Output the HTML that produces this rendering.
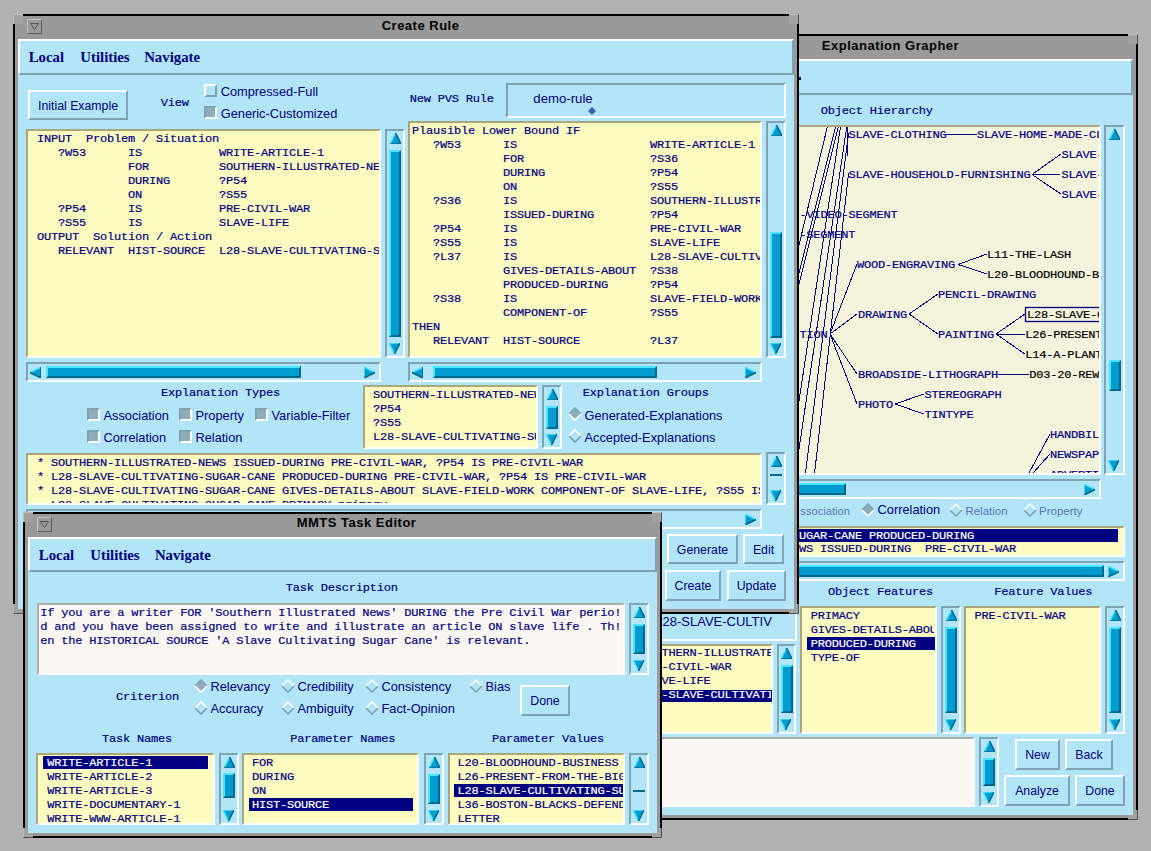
<!DOCTYPE html><html><head><meta charset="utf-8"><style>html,body{margin:0;padding:0;width:1151px;height:851px;overflow:hidden;background:#b2b2b2}div{position:absolute;box-sizing:border-box}svg{position:absolute}</style></head><body>
<div style="left:560px;top:34px;width:578px;height:786px;background:#000;"></div>
<div style="left:562px;top:36px;width:574px;height:782px;background:#999999;"></div>
<div style="left:560px;top:34px;width:10px;height:10px;background:#a2a2a2;border-top:1px solid #bdbdbd;border-left:1px solid #bdbdbd"></div>
<div style="left:1128px;top:34px;width:10px;height:10px;background:#a2a2a2;border-top:1px solid #bdbdbd;border-right:1px solid #505050"></div>
<div style="left:560px;top:810px;width:10px;height:10px;background:#a2a2a2;border-left:1px solid #bdbdbd;border-bottom:1px solid #505050"></div>
<div style="left:1128px;top:810px;width:10px;height:10px;background:#a2a2a2;border-right:1px solid #505050;border-bottom:1px solid #505050"></div>
<div style="left:574px;top:39px;width:15px;height:15px;background:#999999;border-style:solid;border-width:1px;border-color:#c4c4c4 #5c5c5c #5c5c5c #c4c4c4;"></div>
<svg style="position:absolute;left:577px;top:43px" width="9" height="7"><path d="M0.5,0.5 L8.5,0.5 L4.5,6.5 Z" fill="none" stroke="#555" stroke-width="1"/></svg>
<div style="left:821.8px;top:38.80px;font-family:'Liberation Sans', sans-serif;font-size:13px;line-height:13px;color:#000;font-weight:bold;white-space:pre;letter-spacing:0.5px;">Explanation Grapher</div>
<div style="left:565px;top:58.5px;width:568px;height:756.5px;background:#b3e5f8;"></div>
<div style="left:565px;top:58.5px;width:568px;height:36.0px;background:#b3e5f8;border-style:solid;border-width:2px;border-color:#ffffff #7ea3b2 #7ea3b2 #ffffff;"></div>
<div style="left:820.7px;top:104.50px;font-family:'Liberation Mono', monospace;font-size:12px;line-height:12px;color:#000080;font-weight:normal;white-space:pre;letter-spacing:-0.2px;-webkit-text-stroke:0.2px #000080;transform:scaleY(0.93);transform-origin:0 9.20px;">Object Hierarchy</div>
<div style="left:799px;top:77px;width:2px;height:3px;background:#000080;"></div>
<div style="left:640px;top:125px;width:461px;height:350px;background:#f5f3dc;border-style:solid;border-width:2px;border-color:#aba67e #ffffff #ffffff #aba67e;"></div>
<div style="left:642px;top:127px;width:457px;height:346px;overflow:hidden;">
<svg style="position:absolute;left:0;top:0" width="460" height="350"><line x1="304" y1="7" x2="335" y2="7" stroke="#000080" stroke-width="1" shape-rendering="crispEdges"/><line x1="390" y1="47.5" x2="419" y2="27" stroke="#000080" stroke-width="1" shape-rendering="crispEdges"/><line x1="390" y1="47.5" x2="419" y2="47" stroke="#000080" stroke-width="1" shape-rendering="crispEdges"/><line x1="390" y1="47.5" x2="419" y2="67" stroke="#000080" stroke-width="1" shape-rendering="crispEdges"/><line x1="316" y1="137.5" x2="345" y2="127" stroke="#000080" stroke-width="1" shape-rendering="crispEdges"/><line x1="316" y1="137.5" x2="345" y2="147" stroke="#000080" stroke-width="1" shape-rendering="crispEdges"/><line x1="267" y1="187" x2="296" y2="167" stroke="#000080" stroke-width="1" shape-rendering="crispEdges"/><line x1="267" y1="187" x2="296" y2="207" stroke="#000080" stroke-width="1" shape-rendering="crispEdges"/><line x1="354" y1="207" x2="383" y2="187" stroke="#000080" stroke-width="1" shape-rendering="crispEdges"/><line x1="354" y1="207" x2="383" y2="207" stroke="#000080" stroke-width="1" shape-rendering="crispEdges"/><line x1="354" y1="207" x2="383" y2="227" stroke="#000080" stroke-width="1" shape-rendering="crispEdges"/><line x1="356" y1="247" x2="387" y2="247" stroke="#000080" stroke-width="1" shape-rendering="crispEdges"/><line x1="253" y1="277" x2="282" y2="267" stroke="#000080" stroke-width="1" shape-rendering="crispEdges"/><line x1="253" y1="277" x2="282" y2="287" stroke="#000080" stroke-width="1" shape-rendering="crispEdges"/><line x1="188" y1="207" x2="215" y2="137" stroke="#000080" stroke-width="1" shape-rendering="crispEdges"/><line x1="188" y1="207" x2="215" y2="187" stroke="#000080" stroke-width="1" shape-rendering="crispEdges"/><line x1="188" y1="207" x2="215" y2="247" stroke="#000080" stroke-width="1" shape-rendering="crispEdges"/><line x1="188" y1="207" x2="215" y2="277" stroke="#000080" stroke-width="1" shape-rendering="crispEdges"/><line x1="387" y1="346" x2="408" y2="307" stroke="#000080" stroke-width="1" shape-rendering="crispEdges"/><line x1="391" y1="346" x2="408" y2="327" stroke="#000080" stroke-width="1" shape-rendering="crispEdges"/><line x1="185.29999999999995" y1="0" x2="128" y2="239" stroke="#000080" stroke-width="1" shape-rendering="crispEdges"/><line x1="193.39999999999998" y1="0" x2="128" y2="262" stroke="#000080" stroke-width="1" shape-rendering="crispEdges"/><line x1="196.29999999999995" y1="0" x2="128" y2="273" stroke="#000080" stroke-width="1" shape-rendering="crispEdges"/><line x1="198.39999999999998" y1="0" x2="128" y2="466" stroke="#000080" stroke-width="1" shape-rendering="crispEdges"/><line x1="204.70000000000005" y1="0" x2="128" y2="518" stroke="#000080" stroke-width="1" shape-rendering="crispEdges"/><line x1="206.60000000000002" y1="6" x2="163.5" y2="346" stroke="#000080" stroke-width="1" shape-rendering="crispEdges"/><line x1="206.60000000000002" y1="46" x2="172.60000000000002" y2="346" stroke="#000080" stroke-width="1" shape-rendering="crispEdges"/><line x1="205" y1="0" x2="205" y2="29" stroke="#000080" stroke-width="1" shape-rendering="crispEdges"/><rect x="383.5" y="180.5" width="100" height="14" fill="none" stroke="#000080" stroke-width="1.3"/></svg>
<div style="left:206.60000000000002px;top:1.80px;font-family:'Liberation Mono', monospace;font-size:12px;line-height:12px;color:#000080;font-weight:normal;white-space:pre;letter-spacing:-0.2px;-webkit-text-stroke:0.2px #000080;transform:scaleY(0.93);transform-origin:0 9.20px;">SLAVE-CLOTHING</div>
<div style="left:335px;top:1.80px;font-family:'Liberation Mono', monospace;font-size:12px;line-height:12px;color:#000080;font-weight:normal;white-space:pre;letter-spacing:-0.2px;-webkit-text-stroke:0.2px #000080;transform:scaleY(0.93);transform-origin:0 9.20px;">SLAVE-HOME-MADE-CLOTHING</div>
<div style="left:206.60000000000002px;top:41.80px;font-family:'Liberation Mono', monospace;font-size:12px;line-height:12px;color:#000080;font-weight:normal;white-space:pre;letter-spacing:-0.2px;-webkit-text-stroke:0.2px #000080;transform:scaleY(0.93);transform-origin:0 9.20px;">SLAVE-HOUSEHOLD-FURNISHING</div>
<div style="left:419.5px;top:21.80px;font-family:'Liberation Mono', monospace;font-size:12px;line-height:12px;color:#000080;font-weight:normal;white-space:pre;letter-spacing:-0.2px;-webkit-text-stroke:0.2px #000080;transform:scaleY(0.93);transform-origin:0 9.20px;">SLAVE-BEDDING</div>
<div style="left:419.5px;top:41.80px;font-family:'Liberation Mono', monospace;font-size:12px;line-height:12px;color:#000080;font-weight:normal;white-space:pre;letter-spacing:-0.2px;-webkit-text-stroke:0.2px #000080;transform:scaleY(0.93);transform-origin:0 9.20px;">SLAVE-FURNITURE</div>
<div style="left:419.5px;top:61.80px;font-family:'Liberation Mono', monospace;font-size:12px;line-height:12px;color:#000080;font-weight:normal;white-space:pre;letter-spacing:-0.2px;-webkit-text-stroke:0.2px #000080;transform:scaleY(0.93);transform-origin:0 9.20px;">SLAVE-UTENSILS</div>
<div style="left:157.60000000000002px;top:81.80px;font-family:'Liberation Mono', monospace;font-size:12px;line-height:12px;color:#000080;font-weight:normal;white-space:pre;letter-spacing:-0.2px;-webkit-text-stroke:0.2px #000080;transform:scaleY(0.93);transform-origin:0 9.20px;">-VIDEO-SEGMENT</div>
<div style="left:157.29999999999995px;top:101.80px;font-family:'Liberation Mono', monospace;font-size:12px;line-height:12px;color:#000080;font-weight:normal;white-space:pre;letter-spacing:-0.2px;-webkit-text-stroke:0.2px #000080;transform:scaleY(0.93);transform-origin:0 9.20px;">-SEGMENT</div>
<div style="left:215px;top:131.80px;font-family:'Liberation Mono', monospace;font-size:12px;line-height:12px;color:#000080;font-weight:normal;white-space:pre;letter-spacing:-0.2px;-webkit-text-stroke:0.2px #000080;transform:scaleY(0.93);transform-origin:0 9.20px;">WOOD-ENGRAVING</div>
<div style="left:345px;top:121.80px;font-family:'Liberation Mono', monospace;font-size:12px;line-height:12px;color:#000000;font-weight:normal;white-space:pre;letter-spacing:-0.2px;-webkit-text-stroke:0.2px #000000;transform:scaleY(0.93);transform-origin:0 9.20px;">L11-THE-LASH</div>
<div style="left:345px;top:141.80px;font-family:'Liberation Mono', monospace;font-size:12px;line-height:12px;color:#000000;font-weight:normal;white-space:pre;letter-spacing:-0.2px;-webkit-text-stroke:0.2px #000000;transform:scaleY(0.93);transform-origin:0 9.20px;">L20-BLOODHOUND-BUSINESS</div>
<div style="left:296px;top:161.80px;font-family:'Liberation Mono', monospace;font-size:12px;line-height:12px;color:#000080;font-weight:normal;white-space:pre;letter-spacing:-0.2px;-webkit-text-stroke:0.2px #000080;transform:scaleY(0.93);transform-origin:0 9.20px;">PENCIL-DRAWING</div>
<div style="left:216px;top:181.80px;font-family:'Liberation Mono', monospace;font-size:12px;line-height:12px;color:#000080;font-weight:normal;white-space:pre;letter-spacing:-0.2px;-webkit-text-stroke:0.2px #000080;transform:scaleY(0.93);transform-origin:0 9.20px;">DRAWING</div>
<div style="left:157.5px;top:201.80px;font-family:'Liberation Mono', monospace;font-size:12px;line-height:12px;color:#000080;font-weight:normal;white-space:pre;letter-spacing:-0.2px;-webkit-text-stroke:0.2px #000080;transform:scaleY(0.93);transform-origin:0 9.20px;">TION</div>
<div style="left:296px;top:201.80px;font-family:'Liberation Mono', monospace;font-size:12px;line-height:12px;color:#000080;font-weight:normal;white-space:pre;letter-spacing:-0.2px;-webkit-text-stroke:0.2px #000080;transform:scaleY(0.93);transform-origin:0 9.20px;">PAINTING</div>
<div style="left:385px;top:181.80px;font-family:'Liberation Mono', monospace;font-size:12px;line-height:12px;color:#000000;font-weight:normal;white-space:pre;letter-spacing:-0.2px;-webkit-text-stroke:0.2px #000000;transform:scaleY(0.93);transform-origin:0 9.20px;">L28-SLAVE-CULTIVATING</div>
<div style="left:383.29999999999995px;top:201.80px;font-family:'Liberation Mono', monospace;font-size:12px;line-height:12px;color:#000000;font-weight:normal;white-space:pre;letter-spacing:-0.2px;-webkit-text-stroke:0.2px #000000;transform:scaleY(0.93);transform-origin:0 9.20px;">L26-PRESENT-FROM</div>
<div style="left:383.29999999999995px;top:221.80px;font-family:'Liberation Mono', monospace;font-size:12px;line-height:12px;color:#000000;font-weight:normal;white-space:pre;letter-spacing:-0.2px;-webkit-text-stroke:0.2px #000000;transform:scaleY(0.93);transform-origin:0 9.20px;">L14-A-PLANTATION</div>
<div style="left:216px;top:241.80px;font-family:'Liberation Mono', monospace;font-size:12px;line-height:12px;color:#000080;font-weight:normal;white-space:pre;letter-spacing:-0.2px;-webkit-text-stroke:0.2px #000080;transform:scaleY(0.93);transform-origin:0 9.20px;">BROADSIDE-LITHOGRAPH</div>
<div style="left:387.29999999999995px;top:241.80px;font-family:'Liberation Mono', monospace;font-size:12px;line-height:12px;color:#000000;font-weight:normal;white-space:pre;letter-spacing:-0.2px;-webkit-text-stroke:0.2px #000000;transform:scaleY(0.93);transform-origin:0 9.20px;">D03-20-REWARD</div>
<div style="left:282.5px;top:261.80px;font-family:'Liberation Mono', monospace;font-size:12px;line-height:12px;color:#000080;font-weight:normal;white-space:pre;letter-spacing:-0.2px;-webkit-text-stroke:0.2px #000080;transform:scaleY(0.93);transform-origin:0 9.20px;">STEREOGRAPH</div>
<div style="left:216px;top:271.80px;font-family:'Liberation Mono', monospace;font-size:12px;line-height:12px;color:#000080;font-weight:normal;white-space:pre;letter-spacing:-0.2px;-webkit-text-stroke:0.2px #000080;transform:scaleY(0.93);transform-origin:0 9.20px;">PHOTO</div>
<div style="left:282.5px;top:281.80px;font-family:'Liberation Mono', monospace;font-size:12px;line-height:12px;color:#000080;font-weight:normal;white-space:pre;letter-spacing:-0.2px;-webkit-text-stroke:0.2px #000080;transform:scaleY(0.93);transform-origin:0 9.20px;">TINTYPE</div>
<div style="left:408px;top:301.80px;font-family:'Liberation Mono', monospace;font-size:12px;line-height:12px;color:#000080;font-weight:normal;white-space:pre;letter-spacing:-0.2px;-webkit-text-stroke:0.2px #000080;transform:scaleY(0.93);transform-origin:0 9.20px;">HANDBILL</div>
<div style="left:408px;top:321.80px;font-family:'Liberation Mono', monospace;font-size:12px;line-height:12px;color:#000080;font-weight:normal;white-space:pre;letter-spacing:-0.2px;-webkit-text-stroke:0.2px #000080;transform:scaleY(0.93);transform-origin:0 9.20px;">NEWSPAPER</div>
<div style="left:408px;top:341.80px;font-family:'Liberation Mono', monospace;font-size:12px;line-height:12px;color:#000080;font-weight:normal;white-space:pre;letter-spacing:-0.2px;-webkit-text-stroke:0.2px #000080;transform:scaleY(0.93);transform-origin:0 9.20px;">ADVERTISEMENT</div>
</div>
<div style="left:1104px;top:125px;width:21px;height:350px;background:#b3e5f8;border-style:solid;border-width:2px;border-color:#7ea3b2 #ffffff #ffffff #7ea3b2;"></div>
<svg style="position:absolute;left:1109.0px;top:129px" width="11" height="11" viewBox="0 0 11 11"><polygon points="5.5,0 11,11 0,11" fill="#009cd0"/><path d="M5.5,0 L0,11" stroke="#48e6ff" stroke-width="1.6" fill="none"/><path d="M5.5,0 L11,11 L0,11" stroke="#00688c" stroke-width="1.6" fill="none"/></svg>
<svg style="position:absolute;left:1108.2px;top:460px" width="11" height="11" viewBox="0 0 11 11"><polygon points="0,0 11,0 5.5,11" fill="#009cd0"/><path d="M0,0 L11,0 M0,0 L5.5,11" stroke="#48e6ff" stroke-width="1.6" fill="none"/><path d="M11,0 L5.5,11" stroke="#00688c" stroke-width="1.6" fill="none"/></svg>
<div style="left:1108.5px;top:360px;width:12.0px;height:31px;background:#009cd0;border-style:solid;border-width:2px;border-color:#48e6ff #00688c #00688c #48e6ff;"></div>
<div style="left:640px;top:479px;width:461px;height:20px;background:#b3e5f8;border-style:solid;border-width:2px;border-color:#7ea3b2 #ffffff #ffffff #7ea3b2;"></div>
<svg style="position:absolute;left:644px;top:483.5px" width="11" height="11" viewBox="0 0 11 11"><polygon points="0,5.5 11,0 11,11" fill="#009cd0"/><path d="M0,5.5 L11,0" stroke="#48e6ff" stroke-width="1.6" fill="none"/><path d="M0,5.5 L11,11 L11,0" stroke="#00688c" stroke-width="1.6" fill="none"/></svg>
<svg style="position:absolute;left:1084px;top:483.5px" width="11" height="11" viewBox="0 0 11 11"><polygon points="0,0 11,5.5 0,11" fill="#009cd0"/><path d="M0,11 L0,0 L11,5.5" stroke="#48e6ff" stroke-width="1.6" fill="none"/><path d="M11,5.5 L0,11" stroke="#00688c" stroke-width="1.6" fill="none"/></svg>
<div style="left:645px;top:483.0px;width:201px;height:12.0px;background:#009cd0;border-style:solid;border-width:2px;border-color:#48e6ff #00688c #00688c #48e6ff;"></div>
<div style="left:800.3px;top:506.02px;font-family:'Liberation Sans', sans-serif;font-size:11.2px;line-height:11.2px;color:rgba(0,0,128,0.55);font-weight:normal;white-space:pre;letter-spacing:0px;">ssociation</div>
<svg style="position:absolute;left:860.5px;top:503px" width="14" height="14" viewBox="0 0 14 14"><polygon points="7.0,1 13,7.0 7.0,13 1,7.0" fill="#8eacba"/><path d="M1,7.0 L7.0,1 L13,7.0" stroke="#7ea3b2" stroke-width="1.6" fill="none"/><path d="M1,7.0 L7.0,13 L13,7.0" stroke="#ffffff" stroke-width="1.6" fill="none"/></svg>
<div style="left:877.6px;top:503.66px;font-family:'Liberation Sans', sans-serif;font-size:12.8px;line-height:12.8px;color:#000080;font-weight:normal;white-space:pre;letter-spacing:0px;">Correlation</div>
<svg style="position:absolute;left:949.1px;top:503px" width="14" height="14" viewBox="0 0 14 14"><polygon points="7.0,1 13,7.0 7.0,13 1,7.0" fill="#b3e5f8"/><path d="M1,7.0 L7.0,1 L13,7.0" stroke="#ffffff" stroke-width="1.6" fill="none"/><path d="M1,7.0 L7.0,13 L13,7.0" stroke="#7ea3b2" stroke-width="1.6" fill="none"/></svg>
<div style="left:965.4px;top:505.77px;font-family:'Liberation Sans', sans-serif;font-size:11.5px;line-height:11.5px;color:rgba(0,0,128,0.55);font-weight:normal;white-space:pre;letter-spacing:0px;">Relation</div>
<svg style="position:absolute;left:1023.0px;top:503px" width="14" height="14" viewBox="0 0 14 14"><polygon points="7.0,1 13,7.0 7.0,13 1,7.0" fill="#b3e5f8"/><path d="M1,7.0 L7.0,1 L13,7.0" stroke="#ffffff" stroke-width="1.6" fill="none"/><path d="M1,7.0 L7.0,13 L13,7.0" stroke="#7ea3b2" stroke-width="1.6" fill="none"/></svg>
<div style="left:1039px;top:505.77px;font-family:'Liberation Sans', sans-serif;font-size:11.5px;line-height:11.5px;color:rgba(0,0,128,0.55);font-weight:normal;white-space:pre;letter-spacing:0px;">Property</div>
<div style="left:640px;top:526px;width:485px;height:31px;background:#fdfbc0;border-style:solid;border-width:2px;border-color:#aba67e #ffffff #ffffff #aba67e;"></div>
<div style="left:700px;top:529px;width:418px;height:13px;background:#000080;"></div>
<div style="left:624px;top:529.60px;font-family:'Liberation Mono', monospace;font-size:12px;line-height:12px;color:#fff;font-weight:normal;white-space:pre;letter-spacing:-0.2px;-webkit-text-stroke:0.2px #fff;transform:scaleY(0.93);transform-origin:0 9.20px;">* L28-SLAVE-CULTIVATING-SUGAR-CANE PRODUCED-DURING</div>
<div style="left:624px;top:543.30px;font-family:'Liberation Mono', monospace;font-size:12px;line-height:12px;color:#000080;font-weight:normal;white-space:pre;letter-spacing:-0.2px;-webkit-text-stroke:0.2px #000080;transform:scaleY(0.93);transform-origin:0 9.20px;">* SOUTHERN-ILLUSTRATED-NEWS ISSUED-DURING  PRE-CIVIL-WAR</div>
<div style="left:640px;top:561px;width:485px;height:20px;background:#b3e5f8;border-style:solid;border-width:2px;border-color:#7ea3b2 #ffffff #ffffff #7ea3b2;"></div>
<svg style="position:absolute;left:644px;top:565.5px" width="11" height="11" viewBox="0 0 11 11"><polygon points="0,5.5 11,0 11,11" fill="#009cd0"/><path d="M0,5.5 L11,0" stroke="#48e6ff" stroke-width="1.6" fill="none"/><path d="M0,5.5 L11,11 L11,0" stroke="#00688c" stroke-width="1.6" fill="none"/></svg>
<svg style="position:absolute;left:1108px;top:565.5px" width="11" height="11" viewBox="0 0 11 11"><polygon points="0,0 11,5.5 0,11" fill="#009cd0"/><path d="M0,11 L0,0 L11,5.5" stroke="#48e6ff" stroke-width="1.6" fill="none"/><path d="M11,5.5 L0,11" stroke="#00688c" stroke-width="1.6" fill="none"/></svg>
<div style="left:645px;top:565.0px;width:459px;height:12.0px;background:#009cd0;border-style:solid;border-width:2px;border-color:#48e6ff #00688c #00688c #48e6ff;"></div>
<div style="left:828px;top:586.30px;font-family:'Liberation Mono', monospace;font-size:12px;line-height:12px;color:#000080;font-weight:normal;white-space:pre;letter-spacing:-0.2px;-webkit-text-stroke:0.2px #000080;transform:scaleY(0.93);transform-origin:0 9.20px;">Object Features</div>
<div style="left:994.3px;top:586.30px;font-family:'Liberation Mono', monospace;font-size:12px;line-height:12px;color:#000080;font-weight:normal;white-space:pre;letter-spacing:-0.2px;-webkit-text-stroke:0.2px #000080;transform:scaleY(0.93);transform-origin:0 9.20px;">Feature Values</div>
<div style="left:800px;top:606px;width:137px;height:128px;background:#fdfbc0;border-style:solid;border-width:2px;border-color:#aba67e #ffffff #ffffff #aba67e;"></div>
<div style="left:807px;top:637px;width:128px;height:13px;background:#000080;"></div>
<div style="left:803px;top:608px;width:131px;height:123px;overflow:hidden;">
<div style="left:7.7000000000000455px;top:1.80px;font-family:'Liberation Mono', monospace;font-size:12px;line-height:12px;color:#000080;font-weight:normal;white-space:pre;letter-spacing:-0.2px;-webkit-text-stroke:0.2px #000080;transform:scaleY(0.93);transform-origin:0 9.20px;">PRIMACY</div>
<div style="left:7.7000000000000455px;top:15.80px;font-family:'Liberation Mono', monospace;font-size:12px;line-height:12px;color:#000080;font-weight:normal;white-space:pre;letter-spacing:-0.2px;-webkit-text-stroke:0.2px #000080;transform:scaleY(0.93);transform-origin:0 9.20px;">GIVES-DETAILS-ABOUT</div>
<div style="left:7.7000000000000455px;top:29.80px;font-family:'Liberation Mono', monospace;font-size:12px;line-height:12px;color:#fff;font-weight:normal;white-space:pre;letter-spacing:-0.2px;-webkit-text-stroke:0.2px #fff;transform:scaleY(0.93);transform-origin:0 9.20px;">PRODUCED-DURING</div>
<div style="left:7.7000000000000455px;top:43.80px;font-family:'Liberation Mono', monospace;font-size:12px;line-height:12px;color:#000080;font-weight:normal;white-space:pre;letter-spacing:-0.2px;-webkit-text-stroke:0.2px #000080;transform:scaleY(0.93);transform-origin:0 9.20px;">TYPE-OF</div>
</div>
<div style="left:941px;top:606px;width:20px;height:128px;background:#b3e5f8;border-style:solid;border-width:2px;border-color:#7ea3b2 #ffffff #ffffff #7ea3b2;"></div>
<svg style="position:absolute;left:945.5px;top:610px" width="11" height="11" viewBox="0 0 11 11"><polygon points="5.5,0 11,11 0,11" fill="#009cd0"/><path d="M5.5,0 L0,11" stroke="#48e6ff" stroke-width="1.6" fill="none"/><path d="M5.5,0 L11,11 L0,11" stroke="#00688c" stroke-width="1.6" fill="none"/></svg>
<svg style="position:absolute;left:944.7px;top:719px" width="11" height="11" viewBox="0 0 11 11"><polygon points="0,0 11,0 5.5,11" fill="#009cd0"/><path d="M0,0 L11,0 M0,0 L5.5,11" stroke="#48e6ff" stroke-width="1.6" fill="none"/><path d="M11,0 L5.5,11" stroke="#00688c" stroke-width="1.6" fill="none"/></svg>
<div style="left:945.0px;top:627px;width:12.0px;height:86px;background:#009cd0;border-style:solid;border-width:2px;border-color:#48e6ff #00688c #00688c #48e6ff;"></div>
<div style="left:964px;top:606px;width:137px;height:128px;background:#fdfbc0;border-style:solid;border-width:2px;border-color:#aba67e #ffffff #ffffff #aba67e;"></div>
<div style="left:974.6px;top:609.80px;font-family:'Liberation Mono', monospace;font-size:12px;line-height:12px;color:#000080;font-weight:normal;white-space:pre;letter-spacing:-0.2px;-webkit-text-stroke:0.2px #000080;transform:scaleY(0.93);transform-origin:0 9.20px;">PRE-CIVIL-WAR</div>
<div style="left:1105px;top:606px;width:20px;height:128px;background:#b3e5f8;border-style:solid;border-width:2px;border-color:#7ea3b2 #ffffff #ffffff #7ea3b2;"></div>
<svg style="position:absolute;left:1109.5px;top:610px" width="11" height="11" viewBox="0 0 11 11"><polygon points="5.5,0 11,11 0,11" fill="#009cd0"/><path d="M5.5,0 L0,11" stroke="#48e6ff" stroke-width="1.6" fill="none"/><path d="M5.5,0 L11,11 L0,11" stroke="#00688c" stroke-width="1.6" fill="none"/></svg>
<svg style="position:absolute;left:1108.7px;top:719px" width="11" height="11" viewBox="0 0 11 11"><polygon points="0,0 11,0 5.5,11" fill="#009cd0"/><path d="M0,0 L11,0 M0,0 L5.5,11" stroke="#48e6ff" stroke-width="1.6" fill="none"/><path d="M11,0 L5.5,11" stroke="#00688c" stroke-width="1.6" fill="none"/></svg>
<div style="left:1109.0px;top:627px;width:12.0px;height:86px;background:#009cd0;border-style:solid;border-width:2px;border-color:#48e6ff #00688c #00688c #48e6ff;"></div>
<div style="left:600px;top:560px;width:197px;height:81px;background:#b3e5f8;border-style:solid;border-width:2px;border-color:#7ea3b2 #ffffff #ffffff #7ea3b2;"></div>
<div style="left:602px;top:562px;width:192px;height:77px;overflow:hidden;">
<div style="left:60.5px;top:53.40px;font-family:'Liberation Sans', sans-serif;font-size:13px;line-height:13px;color:#000080;font-weight:normal;white-space:pre;letter-spacing:0px;">28-SLAVE-CULTIV</div>
</div>
<div style="left:600px;top:644px;width:173px;height:90px;background:#fdfbc0;border-style:solid;border-width:2px;border-color:#aba67e #ffffff #ffffff #aba67e;"></div>
<div style="left:602px;top:690px;width:170px;height:12px;background:#000080;"></div>
<div style="left:602px;top:646px;width:169px;height:85px;overflow:hidden;">
<div style="left:38.5px;top:1.20px;font-family:'Liberation Mono', monospace;font-size:12px;line-height:12px;color:#000080;font-weight:normal;white-space:pre;letter-spacing:-0.2px;-webkit-text-stroke:0.2px #000080;transform:scaleY(0.93);transform-origin:0 9.20px;">SOUTHERN-ILLUSTRATED-NEWS</div>
<div style="left:38.5px;top:15.20px;font-family:'Liberation Mono', monospace;font-size:12px;line-height:12px;color:#000080;font-weight:normal;white-space:pre;letter-spacing:-0.2px;-webkit-text-stroke:0.2px #000080;transform:scaleY(0.93);transform-origin:0 9.20px;">PRE-CIVIL-WAR</div>
<div style="left:38.5px;top:29.20px;font-family:'Liberation Mono', monospace;font-size:12px;line-height:12px;color:#000080;font-weight:normal;white-space:pre;letter-spacing:-0.2px;-webkit-text-stroke:0.2px #000080;transform:scaleY(0.93);transform-origin:0 9.20px;">SLAVE-LIFE</div>
<div style="left:38.5px;top:43.20px;font-family:'Liberation Mono', monospace;font-size:12px;line-height:12px;color:#fff;font-weight:normal;white-space:pre;letter-spacing:-0.2px;-webkit-text-stroke:0.2px #fff;transform:scaleY(0.93);transform-origin:0 9.20px;">L28-SLAVE-CULTIVATING-SUGAR-CANE</div>
</div>
<div style="left:777px;top:644px;width:19px;height:90px;background:#b3e5f8;border-style:solid;border-width:2px;border-color:#7ea3b2 #ffffff #ffffff #7ea3b2;"></div>
<svg style="position:absolute;left:781.0px;top:648px" width="11" height="11" viewBox="0 0 11 11"><polygon points="5.5,0 11,11 0,11" fill="#009cd0"/><path d="M5.5,0 L0,11" stroke="#48e6ff" stroke-width="1.6" fill="none"/><path d="M5.5,0 L11,11 L0,11" stroke="#00688c" stroke-width="1.6" fill="none"/></svg>
<svg style="position:absolute;left:780.2px;top:719px" width="11" height="11" viewBox="0 0 11 11"><polygon points="0,0 11,0 5.5,11" fill="#009cd0"/><path d="M0,0 L11,0 M0,0 L5.5,11" stroke="#48e6ff" stroke-width="1.6" fill="none"/><path d="M11,0 L5.5,11" stroke="#00688c" stroke-width="1.6" fill="none"/></svg>
<div style="left:780.5px;top:665px;width:12.0px;height:48px;background:#009cd0;border-style:solid;border-width:2px;border-color:#48e6ff #00688c #00688c #48e6ff;"></div>
<div style="left:600px;top:737px;width:375px;height:70px;background:#fcf7f3;border-style:solid;border-width:2px;border-color:#b0aca8 #ffffff #ffffff #b0aca8;"></div>
<div style="left:979px;top:737px;width:20px;height:70px;background:#b3e5f8;border-style:solid;border-width:2px;border-color:#7ea3b2 #ffffff #ffffff #7ea3b2;"></div>
<svg style="position:absolute;left:983.5px;top:741px" width="11" height="11" viewBox="0 0 11 11"><polygon points="5.5,0 11,11 0,11" fill="#009cd0"/><path d="M5.5,0 L0,11" stroke="#48e6ff" stroke-width="1.6" fill="none"/><path d="M5.5,0 L11,11 L0,11" stroke="#00688c" stroke-width="1.6" fill="none"/></svg>
<svg style="position:absolute;left:982.7px;top:792px" width="11" height="11" viewBox="0 0 11 11"><polygon points="0,0 11,0 5.5,11" fill="#009cd0"/><path d="M0,0 L11,0 M0,0 L5.5,11" stroke="#48e6ff" stroke-width="1.6" fill="none"/><path d="M11,0 L5.5,11" stroke="#00688c" stroke-width="1.6" fill="none"/></svg>
<div style="left:983.0px;top:758px;width:12.0px;height:28px;background:#009cd0;border-style:solid;border-width:2px;border-color:#48e6ff #00688c #00688c #48e6ff;"></div>
<div style="left:1015px;top:739px;width:45px;height:31px;background:#b3e5f8;border-style:solid;border-width:2px;border-color:#ffffff #7ea3b2 #7ea3b2 #ffffff;"></div>
<div style="left:1015px;top:739px;width:45px;height:31px;font-family:'Liberation Sans', sans-serif;font-size:12.3px;line-height:33px;color:#000080;text-align:center;white-space:pre">New</div>
<div style="left:1065px;top:739px;width:48px;height:31px;background:#b3e5f8;border-style:solid;border-width:2px;border-color:#ffffff #7ea3b2 #7ea3b2 #ffffff;"></div>
<div style="left:1065px;top:739px;width:48px;height:31px;font-family:'Liberation Sans', sans-serif;font-size:12.3px;line-height:33px;color:#000080;text-align:center;white-space:pre">Back</div>
<div style="left:1004px;top:775px;width:66px;height:31px;background:#b3e5f8;border-style:solid;border-width:2px;border-color:#ffffff #7ea3b2 #7ea3b2 #ffffff;"></div>
<div style="left:1004px;top:775px;width:66px;height:31px;font-family:'Liberation Sans', sans-serif;font-size:12.3px;line-height:33px;color:#000080;text-align:center;white-space:pre">Analyze</div>
<div style="left:1075px;top:775px;width:50px;height:31px;background:#b3e5f8;border-style:solid;border-width:2px;border-color:#ffffff #7ea3b2 #7ea3b2 #ffffff;"></div>
<div style="left:1075px;top:775px;width:50px;height:31px;font-family:'Liberation Sans', sans-serif;font-size:12.3px;line-height:33px;color:#000080;text-align:center;white-space:pre">Done</div>
<div style="left:13px;top:14px;width:786px;height:600px;background:#000;"></div>
<div style="left:15px;top:16px;width:782px;height:596px;background:#999999;"></div>
<div style="left:13px;top:14px;width:10px;height:10px;background:#a2a2a2;border-top:1px solid #bdbdbd;border-left:1px solid #bdbdbd"></div>
<div style="left:789px;top:14px;width:10px;height:10px;background:#a2a2a2;border-top:1px solid #bdbdbd;border-right:1px solid #505050"></div>
<div style="left:13px;top:604px;width:10px;height:10px;background:#a2a2a2;border-left:1px solid #bdbdbd;border-bottom:1px solid #505050"></div>
<div style="left:789px;top:604px;width:10px;height:10px;background:#a2a2a2;border-right:1px solid #505050;border-bottom:1px solid #505050"></div>
<div style="left:27px;top:19px;width:15px;height:15px;background:#999999;border-style:solid;border-width:1px;border-color:#c4c4c4 #5c5c5c #5c5c5c #c4c4c4;"></div>
<svg style="position:absolute;left:30px;top:23px" width="9" height="7"><path d="M0.5,0.5 L8.5,0.5 L4.5,6.5 Z" fill="none" stroke="#555" stroke-width="1"/></svg>
<div style="left:381.7px;top:18.80px;font-family:'Liberation Sans', sans-serif;font-size:13px;line-height:13px;color:#000;font-weight:bold;white-space:pre;letter-spacing:0.5px;">Create Rule</div>
<div style="left:18px;top:38.5px;width:776px;height:570.5px;background:#b3e5f8;"></div>
<div style="left:18px;top:38.5px;width:776px;height:36.0px;background:#b3e5f8;border-style:solid;border-width:2px;border-color:#ffffff #7ea3b2 #7ea3b2 #ffffff;"></div>
<div style="left:28.7px;top:49.90px;font-family:'Liberation Serif', serif;font-size:14.8px;line-height:14.8px;color:#000080;font-weight:bold;white-space:pre;letter-spacing:0px;">Local</div>
<div style="left:80.3px;top:49.90px;font-family:'Liberation Serif', serif;font-size:14.8px;line-height:14.8px;color:#000080;font-weight:bold;white-space:pre;letter-spacing:0px;">Utilities</div>
<div style="left:144.2px;top:49.90px;font-family:'Liberation Serif', serif;font-size:14.8px;line-height:14.8px;color:#000080;font-weight:bold;white-space:pre;letter-spacing:0px;">Navigate</div>
<div style="left:28px;top:90px;width:100px;height:30px;background:#b3e5f8;border-style:solid;border-width:2px;border-color:#ffffff #7ea3b2 #7ea3b2 #ffffff;"></div>
<div style="left:28px;top:90px;width:100px;height:30px;font-family:'Liberation Sans', sans-serif;font-size:12.3px;line-height:32px;color:#000080;text-align:center;white-space:pre">Initial Example</div>
<div style="left:160.7px;top:96.80px;font-family:'Liberation Mono', monospace;font-size:12px;line-height:12px;color:#000080;font-weight:normal;white-space:pre;letter-spacing:-0.2px;-webkit-text-stroke:0.2px #000080;transform:scaleY(0.93);transform-origin:0 9.20px;">View</div>
<div style="left:204px;top:84px;width:13px;height:13px;background:#b3e5f8;border-style:solid;border-width:2px;border-color:#ffffff #7ea3b2 #7ea3b2 #ffffff;"></div>
<div style="left:204px;top:106px;width:13px;height:13px;background:#8eacba;border-style:solid;border-width:2px;border-color:#7ea3b2 #ffffff #ffffff #7ea3b2;"></div>
<div style="left:220.7px;top:86.16px;font-family:'Liberation Sans', sans-serif;font-size:12.8px;line-height:12.8px;color:#000080;font-weight:normal;white-space:pre;letter-spacing:0px;">Compressed-Full</div>
<div style="left:220.7px;top:108.16px;font-family:'Liberation Sans', sans-serif;font-size:12.8px;line-height:12.8px;color:#000080;font-weight:normal;white-space:pre;letter-spacing:0px;">Generic-Customized</div>
<div style="left:409.8px;top:92.50px;font-family:'Liberation Mono', monospace;font-size:12px;line-height:12px;color:#000080;font-weight:normal;white-space:pre;letter-spacing:-0.2px;-webkit-text-stroke:0.2px #000080;transform:scaleY(0.93);transform-origin:0 9.20px;">New PVS Rule</div>
<div style="left:506px;top:83px;width:280px;height:35px;background:#b3e5f8;border-style:solid;border-width:2px;border-color:#7ea3b2 #ffffff #ffffff #7ea3b2;"></div>
<div style="left:533.3px;top:92.23px;font-family:'Liberation Sans', sans-serif;font-size:13.2px;line-height:13.2px;color:#000080;font-weight:normal;white-space:pre;letter-spacing:0px;">demo-rule</div>
<svg style="position:absolute;left:588px;top:107px" width="8" height="8"><polygon points="4,0 8,4 4,8 0,4" fill="#000080" opacity="0.6"/></svg>
<div style="left:26px;top:129px;width:355px;height:229px;background:#fdfbc0;border-style:solid;border-width:2px;border-color:#aba67e #ffffff #ffffff #aba67e;"></div>
<div style="left:28px;top:131px;width:351px;height:225px;overflow:hidden;">
<div style="left:9px;top:1.80px;font-family:'Liberation Mono', monospace;font-size:12px;line-height:12px;color:#000080;font-weight:normal;white-space:pre;letter-spacing:-0.2px;-webkit-text-stroke:0.2px #000080;transform:scaleY(0.93);transform-origin:0 9.20px;">INPUT  Problem / Situation</div>
<div style="left:9px;top:15.80px;font-family:'Liberation Mono', monospace;font-size:12px;line-height:12px;color:#000080;font-weight:normal;white-space:pre;letter-spacing:-0.2px;-webkit-text-stroke:0.2px #000080;transform:scaleY(0.93);transform-origin:0 9.20px;">   ?W53      IS           WRITE-ARTICLE-1</div>
<div style="left:9px;top:29.80px;font-family:'Liberation Mono', monospace;font-size:12px;line-height:12px;color:#000080;font-weight:normal;white-space:pre;letter-spacing:-0.2px;-webkit-text-stroke:0.2px #000080;transform:scaleY(0.93);transform-origin:0 9.20px;">             FOR          SOUTHERN-ILLUSTRATED-NEWS</div>
<div style="left:9px;top:43.80px;font-family:'Liberation Mono', monospace;font-size:12px;line-height:12px;color:#000080;font-weight:normal;white-space:pre;letter-spacing:-0.2px;-webkit-text-stroke:0.2px #000080;transform:scaleY(0.93);transform-origin:0 9.20px;">             DURING       ?P54</div>
<div style="left:9px;top:57.80px;font-family:'Liberation Mono', monospace;font-size:12px;line-height:12px;color:#000080;font-weight:normal;white-space:pre;letter-spacing:-0.2px;-webkit-text-stroke:0.2px #000080;transform:scaleY(0.93);transform-origin:0 9.20px;">             ON           ?S55</div>
<div style="left:9px;top:71.80px;font-family:'Liberation Mono', monospace;font-size:12px;line-height:12px;color:#000080;font-weight:normal;white-space:pre;letter-spacing:-0.2px;-webkit-text-stroke:0.2px #000080;transform:scaleY(0.93);transform-origin:0 9.20px;">   ?P54      IS           PRE-CIVIL-WAR</div>
<div style="left:9px;top:85.80px;font-family:'Liberation Mono', monospace;font-size:12px;line-height:12px;color:#000080;font-weight:normal;white-space:pre;letter-spacing:-0.2px;-webkit-text-stroke:0.2px #000080;transform:scaleY(0.93);transform-origin:0 9.20px;">   ?S55      IS           SLAVE-LIFE</div>
<div style="left:9px;top:99.80px;font-family:'Liberation Mono', monospace;font-size:12px;line-height:12px;color:#000080;font-weight:normal;white-space:pre;letter-spacing:-0.2px;-webkit-text-stroke:0.2px #000080;transform:scaleY(0.93);transform-origin:0 9.20px;">OUTPUT  Solution / Action</div>
<div style="left:9px;top:113.80px;font-family:'Liberation Mono', monospace;font-size:12px;line-height:12px;color:#000080;font-weight:normal;white-space:pre;letter-spacing:-0.2px;-webkit-text-stroke:0.2px #000080;transform:scaleY(0.93);transform-origin:0 9.20px;">   RELEVANT  HIST-SOURCE  L28-SLAVE-CULTIVATING-SUGAR-CANE</div>
</div>
<div style="left:385px;top:129px;width:20px;height:229px;background:#b3e5f8;border-style:solid;border-width:2px;border-color:#7ea3b2 #ffffff #ffffff #7ea3b2;"></div>
<svg style="position:absolute;left:389.5px;top:133px" width="11" height="11" viewBox="0 0 11 11"><polygon points="5.5,0 11,11 0,11" fill="#009cd0"/><path d="M5.5,0 L0,11" stroke="#48e6ff" stroke-width="1.6" fill="none"/><path d="M5.5,0 L11,11 L0,11" stroke="#00688c" stroke-width="1.6" fill="none"/></svg>
<svg style="position:absolute;left:388.7px;top:343px" width="11" height="11" viewBox="0 0 11 11"><polygon points="0,0 11,0 5.5,11" fill="#009cd0"/><path d="M0,0 L11,0 M0,0 L5.5,11" stroke="#48e6ff" stroke-width="1.6" fill="none"/><path d="M11,0 L5.5,11" stroke="#00688c" stroke-width="1.6" fill="none"/></svg>
<div style="left:389.0px;top:150px;width:12.0px;height:187px;background:#009cd0;border-style:solid;border-width:2px;border-color:#48e6ff #00688c #00688c #48e6ff;"></div>
<div style="left:408px;top:121px;width:354px;height:237px;background:#fdfbc0;border-style:solid;border-width:2px;border-color:#aba67e #ffffff #ffffff #aba67e;"></div>
<div style="left:410px;top:123px;width:350px;height:233px;overflow:hidden;">
<div style="left:2px;top:1.80px;font-family:'Liberation Mono', monospace;font-size:12px;line-height:12px;color:#000080;font-weight:normal;white-space:pre;letter-spacing:-0.2px;-webkit-text-stroke:0.2px #000080;transform:scaleY(0.93);transform-origin:0 9.20px;">Plausible Lower Bound IF</div>
<div style="left:2px;top:15.80px;font-family:'Liberation Mono', monospace;font-size:12px;line-height:12px;color:#000080;font-weight:normal;white-space:pre;letter-spacing:-0.2px;-webkit-text-stroke:0.2px #000080;transform:scaleY(0.93);transform-origin:0 9.20px;">   ?W53      IS                   WRITE-ARTICLE-1</div>
<div style="left:2px;top:29.80px;font-family:'Liberation Mono', monospace;font-size:12px;line-height:12px;color:#000080;font-weight:normal;white-space:pre;letter-spacing:-0.2px;-webkit-text-stroke:0.2px #000080;transform:scaleY(0.93);transform-origin:0 9.20px;">             FOR                  ?S36</div>
<div style="left:2px;top:43.80px;font-family:'Liberation Mono', monospace;font-size:12px;line-height:12px;color:#000080;font-weight:normal;white-space:pre;letter-spacing:-0.2px;-webkit-text-stroke:0.2px #000080;transform:scaleY(0.93);transform-origin:0 9.20px;">             DURING               ?P54</div>
<div style="left:2px;top:57.80px;font-family:'Liberation Mono', monospace;font-size:12px;line-height:12px;color:#000080;font-weight:normal;white-space:pre;letter-spacing:-0.2px;-webkit-text-stroke:0.2px #000080;transform:scaleY(0.93);transform-origin:0 9.20px;">             ON                   ?S55</div>
<div style="left:2px;top:71.80px;font-family:'Liberation Mono', monospace;font-size:12px;line-height:12px;color:#000080;font-weight:normal;white-space:pre;letter-spacing:-0.2px;-webkit-text-stroke:0.2px #000080;transform:scaleY(0.93);transform-origin:0 9.20px;">   ?S36      IS                   SOUTHERN-ILLUSTRATED-NEWS</div>
<div style="left:2px;top:85.80px;font-family:'Liberation Mono', monospace;font-size:12px;line-height:12px;color:#000080;font-weight:normal;white-space:pre;letter-spacing:-0.2px;-webkit-text-stroke:0.2px #000080;transform:scaleY(0.93);transform-origin:0 9.20px;">             ISSUED-DURING        ?P54</div>
<div style="left:2px;top:99.80px;font-family:'Liberation Mono', monospace;font-size:12px;line-height:12px;color:#000080;font-weight:normal;white-space:pre;letter-spacing:-0.2px;-webkit-text-stroke:0.2px #000080;transform:scaleY(0.93);transform-origin:0 9.20px;">   ?P54      IS                   PRE-CIVIL-WAR</div>
<div style="left:2px;top:113.80px;font-family:'Liberation Mono', monospace;font-size:12px;line-height:12px;color:#000080;font-weight:normal;white-space:pre;letter-spacing:-0.2px;-webkit-text-stroke:0.2px #000080;transform:scaleY(0.93);transform-origin:0 9.20px;">   ?S55      IS                   SLAVE-LIFE</div>
<div style="left:2px;top:127.80px;font-family:'Liberation Mono', monospace;font-size:12px;line-height:12px;color:#000080;font-weight:normal;white-space:pre;letter-spacing:-0.2px;-webkit-text-stroke:0.2px #000080;transform:scaleY(0.93);transform-origin:0 9.20px;">   ?L37      IS                   L28-SLAVE-CULTIVATING-SUGAR-CANE</div>
<div style="left:2px;top:141.80px;font-family:'Liberation Mono', monospace;font-size:12px;line-height:12px;color:#000080;font-weight:normal;white-space:pre;letter-spacing:-0.2px;-webkit-text-stroke:0.2px #000080;transform:scaleY(0.93);transform-origin:0 9.20px;">             GIVES-DETAILS-ABOUT  ?S38</div>
<div style="left:2px;top:155.80px;font-family:'Liberation Mono', monospace;font-size:12px;line-height:12px;color:#000080;font-weight:normal;white-space:pre;letter-spacing:-0.2px;-webkit-text-stroke:0.2px #000080;transform:scaleY(0.93);transform-origin:0 9.20px;">             PRODUCED-DURING      ?P54</div>
<div style="left:2px;top:169.80px;font-family:'Liberation Mono', monospace;font-size:12px;line-height:12px;color:#000080;font-weight:normal;white-space:pre;letter-spacing:-0.2px;-webkit-text-stroke:0.2px #000080;transform:scaleY(0.93);transform-origin:0 9.20px;">   ?S38      IS                   SLAVE-FIELD-WORK</div>
<div style="left:2px;top:183.80px;font-family:'Liberation Mono', monospace;font-size:12px;line-height:12px;color:#000080;font-weight:normal;white-space:pre;letter-spacing:-0.2px;-webkit-text-stroke:0.2px #000080;transform:scaleY(0.93);transform-origin:0 9.20px;">             COMPONENT-OF         ?S55</div>
<div style="left:2px;top:197.80px;font-family:'Liberation Mono', monospace;font-size:12px;line-height:12px;color:#000080;font-weight:normal;white-space:pre;letter-spacing:-0.2px;-webkit-text-stroke:0.2px #000080;transform:scaleY(0.93);transform-origin:0 9.20px;">THEN</div>
<div style="left:2px;top:211.80px;font-family:'Liberation Mono', monospace;font-size:12px;line-height:12px;color:#000080;font-weight:normal;white-space:pre;letter-spacing:-0.2px;-webkit-text-stroke:0.2px #000080;transform:scaleY(0.93);transform-origin:0 9.20px;">   RELEVANT  HIST-SOURCE          ?L37</div>
</div>
<div style="left:766px;top:121px;width:20px;height:237px;background:#b3e5f8;border-style:solid;border-width:2px;border-color:#7ea3b2 #ffffff #ffffff #7ea3b2;"></div>
<svg style="position:absolute;left:770.5px;top:125px" width="11" height="11" viewBox="0 0 11 11"><polygon points="5.5,0 11,11 0,11" fill="#009cd0"/><path d="M5.5,0 L0,11" stroke="#48e6ff" stroke-width="1.6" fill="none"/><path d="M5.5,0 L11,11 L0,11" stroke="#00688c" stroke-width="1.6" fill="none"/></svg>
<svg style="position:absolute;left:769.7px;top:343px" width="11" height="11" viewBox="0 0 11 11"><polygon points="0,0 11,0 5.5,11" fill="#009cd0"/><path d="M0,0 L11,0 M0,0 L5.5,11" stroke="#48e6ff" stroke-width="1.6" fill="none"/><path d="M11,0 L5.5,11" stroke="#00688c" stroke-width="1.6" fill="none"/></svg>
<div style="left:770.0px;top:232px;width:12.0px;height:106px;background:#009cd0;border-style:solid;border-width:2px;border-color:#48e6ff #00688c #00688c #48e6ff;"></div>
<div style="left:26px;top:362px;width:355px;height:20px;background:#b3e5f8;border-style:solid;border-width:2px;border-color:#7ea3b2 #ffffff #ffffff #7ea3b2;"></div>
<svg style="position:absolute;left:30px;top:366.5px" width="11" height="11" viewBox="0 0 11 11"><polygon points="0,5.5 11,0 11,11" fill="#009cd0"/><path d="M0,5.5 L11,0" stroke="#48e6ff" stroke-width="1.6" fill="none"/><path d="M0,5.5 L11,11 L11,0" stroke="#00688c" stroke-width="1.6" fill="none"/></svg>
<svg style="position:absolute;left:364px;top:366.5px" width="11" height="11" viewBox="0 0 11 11"><polygon points="0,0 11,5.5 0,11" fill="#009cd0"/><path d="M0,11 L0,0 L11,5.5" stroke="#48e6ff" stroke-width="1.6" fill="none"/><path d="M11,5.5 L0,11" stroke="#00688c" stroke-width="1.6" fill="none"/></svg>
<div style="left:46px;top:366.0px;width:255px;height:12.0px;background:#009cd0;border-style:solid;border-width:2px;border-color:#48e6ff #00688c #00688c #48e6ff;"></div>
<div style="left:408px;top:362px;width:354px;height:20px;background:#b3e5f8;border-style:solid;border-width:2px;border-color:#7ea3b2 #ffffff #ffffff #7ea3b2;"></div>
<svg style="position:absolute;left:412px;top:366.5px" width="11" height="11" viewBox="0 0 11 11"><polygon points="0,5.5 11,0 11,11" fill="#009cd0"/><path d="M0,5.5 L11,0" stroke="#48e6ff" stroke-width="1.6" fill="none"/><path d="M0,5.5 L11,11 L11,0" stroke="#00688c" stroke-width="1.6" fill="none"/></svg>
<svg style="position:absolute;left:745px;top:366.5px" width="11" height="11" viewBox="0 0 11 11"><polygon points="0,0 11,5.5 0,11" fill="#009cd0"/><path d="M0,11 L0,0 L11,5.5" stroke="#48e6ff" stroke-width="1.6" fill="none"/><path d="M11,5.5 L0,11" stroke="#00688c" stroke-width="1.6" fill="none"/></svg>
<div style="left:433px;top:366.0px;width:224px;height:12.0px;background:#009cd0;border-style:solid;border-width:2px;border-color:#48e6ff #00688c #00688c #48e6ff;"></div>
<div style="left:161px;top:386.80px;font-family:'Liberation Mono', monospace;font-size:12px;line-height:12px;color:#000080;font-weight:normal;white-space:pre;letter-spacing:-0.2px;-webkit-text-stroke:0.2px #000080;transform:scaleY(0.93);transform-origin:0 9.20px;">Explanation Types</div>
<div style="left:87px;top:408px;width:13px;height:13px;background:#8eacba;border-style:solid;border-width:2px;border-color:#7ea3b2 #ffffff #ffffff #7ea3b2;"></div>
<div style="left:103.5px;top:410.16px;font-family:'Liberation Sans', sans-serif;font-size:12.8px;line-height:12.8px;color:#000080;font-weight:normal;white-space:pre;letter-spacing:0px;">Association</div>
<div style="left:179px;top:408px;width:13px;height:13px;background:#8eacba;border-style:solid;border-width:2px;border-color:#7ea3b2 #ffffff #ffffff #7ea3b2;"></div>
<div style="left:195.5px;top:410.16px;font-family:'Liberation Sans', sans-serif;font-size:12.8px;line-height:12.8px;color:#000080;font-weight:normal;white-space:pre;letter-spacing:0px;">Property</div>
<div style="left:255px;top:408px;width:13px;height:13px;background:#8eacba;border-style:solid;border-width:2px;border-color:#7ea3b2 #ffffff #ffffff #7ea3b2;"></div>
<div style="left:271.5px;top:410.16px;font-family:'Liberation Sans', sans-serif;font-size:12.8px;line-height:12.8px;color:#000080;font-weight:normal;white-space:pre;letter-spacing:0px;">Variable-Filter</div>
<div style="left:87px;top:430px;width:13px;height:13px;background:#8eacba;border-style:solid;border-width:2px;border-color:#7ea3b2 #ffffff #ffffff #7ea3b2;"></div>
<div style="left:103.5px;top:432.16px;font-family:'Liberation Sans', sans-serif;font-size:12.8px;line-height:12.8px;color:#000080;font-weight:normal;white-space:pre;letter-spacing:0px;">Correlation</div>
<div style="left:179px;top:430px;width:13px;height:13px;background:#8eacba;border-style:solid;border-width:2px;border-color:#7ea3b2 #ffffff #ffffff #7ea3b2;"></div>
<div style="left:195.5px;top:432.16px;font-family:'Liberation Sans', sans-serif;font-size:12.8px;line-height:12.8px;color:#000080;font-weight:normal;white-space:pre;letter-spacing:0px;">Relation</div>
<div style="left:363px;top:385px;width:175px;height:64px;background:#fdfbc0;border-style:solid;border-width:2px;border-color:#aba67e #ffffff #ffffff #aba67e;"></div>
<div style="left:365px;top:387px;width:171px;height:60px;overflow:hidden;">
<div style="left:8px;top:1.80px;font-family:'Liberation Mono', monospace;font-size:12px;line-height:12px;color:#000080;font-weight:normal;white-space:pre;letter-spacing:-0.2px;-webkit-text-stroke:0.2px #000080;transform:scaleY(0.93);transform-origin:0 9.20px;">SOUTHERN-ILLUSTRATED-NEWS</div>
<div style="left:8px;top:15.80px;font-family:'Liberation Mono', monospace;font-size:12px;line-height:12px;color:#000080;font-weight:normal;white-space:pre;letter-spacing:-0.2px;-webkit-text-stroke:0.2px #000080;transform:scaleY(0.93);transform-origin:0 9.20px;">?P54</div>
<div style="left:8px;top:29.80px;font-family:'Liberation Mono', monospace;font-size:12px;line-height:12px;color:#000080;font-weight:normal;white-space:pre;letter-spacing:-0.2px;-webkit-text-stroke:0.2px #000080;transform:scaleY(0.93);transform-origin:0 9.20px;">?S55</div>
<div style="left:8px;top:43.80px;font-family:'Liberation Mono', monospace;font-size:12px;line-height:12px;color:#000080;font-weight:normal;white-space:pre;letter-spacing:-0.2px;-webkit-text-stroke:0.2px #000080;transform:scaleY(0.93);transform-origin:0 9.20px;">L28-SLAVE-CULTIVATING-SUGAR-CANE</div>
</div>
<div style="left:542px;top:385px;width:20px;height:64px;background:#b3e5f8;border-style:solid;border-width:2px;border-color:#7ea3b2 #ffffff #ffffff #7ea3b2;"></div>
<svg style="position:absolute;left:546.5px;top:389px" width="11" height="11" viewBox="0 0 11 11"><polygon points="5.5,0 11,11 0,11" fill="#009cd0"/><path d="M5.5,0 L0,11" stroke="#48e6ff" stroke-width="1.6" fill="none"/><path d="M5.5,0 L11,11 L0,11" stroke="#00688c" stroke-width="1.6" fill="none"/></svg>
<svg style="position:absolute;left:545.7px;top:434px" width="11" height="11" viewBox="0 0 11 11"><polygon points="0,0 11,0 5.5,11" fill="#009cd0"/><path d="M0,0 L11,0 M0,0 L5.5,11" stroke="#48e6ff" stroke-width="1.6" fill="none"/><path d="M11,0 L5.5,11" stroke="#00688c" stroke-width="1.6" fill="none"/></svg>
<div style="left:546.0px;top:406px;width:12.0px;height:23px;background:#009cd0;border-style:solid;border-width:2px;border-color:#48e6ff #00688c #00688c #48e6ff;"></div>
<div style="left:582.7px;top:386.80px;font-family:'Liberation Mono', monospace;font-size:12px;line-height:12px;color:#000080;font-weight:normal;white-space:pre;letter-spacing:-0.2px;-webkit-text-stroke:0.2px #000080;transform:scaleY(0.93);transform-origin:0 9.20px;">Explanation Groups</div>
<svg style="position:absolute;left:567.5px;top:407px" width="14" height="14" viewBox="0 0 14 14"><polygon points="7.0,1 13,7.0 7.0,13 1,7.0" fill="#8eacba"/><path d="M1,7.0 L7.0,1 L13,7.0" stroke="#7ea3b2" stroke-width="1.6" fill="none"/><path d="M1,7.0 L7.0,13 L13,7.0" stroke="#ffffff" stroke-width="1.6" fill="none"/></svg>
<svg style="position:absolute;left:567.5px;top:429px" width="14" height="14" viewBox="0 0 14 14"><polygon points="7.0,1 13,7.0 7.0,13 1,7.0" fill="#b3e5f8"/><path d="M1,7.0 L7.0,1 L13,7.0" stroke="#ffffff" stroke-width="1.6" fill="none"/><path d="M1,7.0 L7.0,13 L13,7.0" stroke="#7ea3b2" stroke-width="1.6" fill="none"/></svg>
<div style="left:584.5px;top:410.16px;font-family:'Liberation Sans', sans-serif;font-size:12.8px;line-height:12.8px;color:#000080;font-weight:normal;white-space:pre;letter-spacing:0px;">Generated-Explanations</div>
<div style="left:584.5px;top:432.16px;font-family:'Liberation Sans', sans-serif;font-size:12.8px;line-height:12.8px;color:#000080;font-weight:normal;white-space:pre;letter-spacing:0px;">Accepted-Explanations</div>
<div style="left:26px;top:453px;width:736px;height:52px;background:#fdfbc0;border-style:solid;border-width:2px;border-color:#aba67e #ffffff #ffffff #aba67e;"></div>
<div style="left:28px;top:455px;width:732px;height:48px;overflow:hidden;">
<div style="left:9px;top:1.80px;font-family:'Liberation Mono', monospace;font-size:12px;line-height:12px;color:#000080;font-weight:normal;white-space:pre;letter-spacing:-0.2px;-webkit-text-stroke:0.2px #000080;transform:scaleY(0.93);transform-origin:0 9.20px;">* SOUTHERN-ILLUSTRATED-NEWS ISSUED-DURING PRE-CIVIL-WAR, ?P54 IS PRE-CIVIL-WAR</div>
<div style="left:9px;top:15.80px;font-family:'Liberation Mono', monospace;font-size:12px;line-height:12px;color:#000080;font-weight:normal;white-space:pre;letter-spacing:-0.2px;-webkit-text-stroke:0.2px #000080;transform:scaleY(0.93);transform-origin:0 9.20px;">* L28-SLAVE-CULTIVATING-SUGAR-CANE PRODUCED-DURING PRE-CIVIL-WAR, ?P54 IS PRE-CIVIL-WAR</div>
<div style="left:9px;top:29.80px;font-family:'Liberation Mono', monospace;font-size:12px;line-height:12px;color:#000080;font-weight:normal;white-space:pre;letter-spacing:-0.2px;-webkit-text-stroke:0.2px #000080;transform:scaleY(0.93);transform-origin:0 9.20px;">* L28-SLAVE-CULTIVATING-SUGAR-CANE GIVES-DETAILS-ABOUT SLAVE-FIELD-WORK COMPONENT-OF SLAVE-LIFE, ?S55 IS SLAVE-LIFE</div>
<div style="left:9px;top:43.80px;font-family:'Liberation Mono', monospace;font-size:12px;line-height:12px;color:#000080;font-weight:normal;white-space:pre;letter-spacing:-0.2px;-webkit-text-stroke:0.2px #000080;transform:scaleY(0.93);transform-origin:0 9.20px;">  L28-SLAVE-CULTIVATING-SUGAR-CANE PRIMACY primary</div>
</div>
<div style="left:766px;top:452px;width:20px;height:53px;background:#b3e5f8;border-style:solid;border-width:2px;border-color:#7ea3b2 #ffffff #ffffff #7ea3b2;"></div>
<svg style="position:absolute;left:770.5px;top:456px" width="11" height="11" viewBox="0 0 11 11"><polygon points="5.5,0 11,11 0,11" fill="#009cd0"/><path d="M5.5,0 L0,11" stroke="#48e6ff" stroke-width="1.6" fill="none"/><path d="M5.5,0 L11,11 L0,11" stroke="#00688c" stroke-width="1.6" fill="none"/></svg>
<svg style="position:absolute;left:769.7px;top:490px" width="11" height="11" viewBox="0 0 11 11"><polygon points="0,0 11,0 5.5,11" fill="#009cd0"/><path d="M0,0 L11,0 M0,0 L5.5,11" stroke="#48e6ff" stroke-width="1.6" fill="none"/><path d="M11,0 L5.5,11" stroke="#00688c" stroke-width="1.6" fill="none"/></svg>
<div style="left:770.0px;top:474px;width:12.0px;height:2px;background:#00688c;"></div>
<div style="left:26px;top:509px;width:736px;height:20px;background:#b3e5f8;border-style:solid;border-width:2px;border-color:#7ea3b2 #ffffff #ffffff #7ea3b2;"></div>
<svg style="position:absolute;left:30px;top:513.5px" width="11" height="11" viewBox="0 0 11 11"><polygon points="0,5.5 11,0 11,11" fill="#009cd0"/><path d="M0,5.5 L11,0" stroke="#48e6ff" stroke-width="1.6" fill="none"/><path d="M0,5.5 L11,11 L11,0" stroke="#00688c" stroke-width="1.6" fill="none"/></svg>
<svg style="position:absolute;left:745px;top:513.5px" width="11" height="11" viewBox="0 0 11 11"><polygon points="0,0 11,5.5 0,11" fill="#009cd0"/><path d="M0,11 L0,0 L11,5.5" stroke="#48e6ff" stroke-width="1.6" fill="none"/><path d="M11,5.5 L0,11" stroke="#00688c" stroke-width="1.6" fill="none"/></svg>
<div style="left:46px;top:513.0px;width:616px;height:12.0px;background:#009cd0;border-style:solid;border-width:2px;border-color:#48e6ff #00688c #00688c #48e6ff;"></div>
<div style="left:667px;top:534px;width:71px;height:30px;background:#b3e5f8;border-style:solid;border-width:2px;border-color:#ffffff #7ea3b2 #7ea3b2 #ffffff;"></div>
<div style="left:667px;top:534px;width:71px;height:30px;font-family:'Liberation Sans', sans-serif;font-size:12.3px;line-height:32px;color:#000080;text-align:center;white-space:pre">Generate</div>
<div style="left:743px;top:534px;width:41px;height:30px;background:#b3e5f8;border-style:solid;border-width:2px;border-color:#ffffff #7ea3b2 #7ea3b2 #ffffff;"></div>
<div style="left:743px;top:534px;width:41px;height:30px;font-family:'Liberation Sans', sans-serif;font-size:12.3px;line-height:32px;color:#000080;text-align:center;white-space:pre">Edit</div>
<div style="left:665px;top:570px;width:56px;height:31px;background:#b3e5f8;border-style:solid;border-width:2px;border-color:#ffffff #7ea3b2 #7ea3b2 #ffffff;"></div>
<div style="left:665px;top:570px;width:56px;height:31px;font-family:'Liberation Sans', sans-serif;font-size:12.3px;line-height:33px;color:#000080;text-align:center;white-space:pre">Create</div>
<div style="left:727px;top:570px;width:59px;height:31px;background:#b3e5f8;border-style:solid;border-width:2px;border-color:#ffffff #7ea3b2 #7ea3b2 #ffffff;"></div>
<div style="left:727px;top:570px;width:59px;height:31px;font-family:'Liberation Sans', sans-serif;font-size:12.3px;line-height:33px;color:#000080;text-align:center;white-space:pre">Update</div>
<div style="left:23px;top:512px;width:639px;height:326px;background:#000;"></div>
<div style="left:25px;top:514px;width:635px;height:322px;background:#999999;"></div>
<div style="left:23px;top:512px;width:10px;height:10px;background:#a2a2a2;border-top:1px solid #bdbdbd;border-left:1px solid #bdbdbd"></div>
<div style="left:652px;top:512px;width:10px;height:10px;background:#a2a2a2;border-top:1px solid #bdbdbd;border-right:1px solid #505050"></div>
<div style="left:23px;top:828px;width:10px;height:10px;background:#a2a2a2;border-left:1px solid #bdbdbd;border-bottom:1px solid #505050"></div>
<div style="left:652px;top:828px;width:10px;height:10px;background:#a2a2a2;border-right:1px solid #505050;border-bottom:1px solid #505050"></div>
<div style="left:37px;top:517px;width:15px;height:15px;background:#999999;border-style:solid;border-width:1px;border-color:#c4c4c4 #5c5c5c #5c5c5c #c4c4c4;"></div>
<svg style="position:absolute;left:40px;top:521px" width="9" height="7"><path d="M0.5,0.5 L8.5,0.5 L4.5,6.5 Z" fill="none" stroke="#555" stroke-width="1"/></svg>
<div style="left:296.7px;top:516.40px;font-family:'Liberation Sans', sans-serif;font-size:13px;line-height:13px;color:#000;font-weight:bold;white-space:pre;letter-spacing:0.5px;">MMTS Task Editor</div>
<div style="left:28px;top:536.5px;width:629px;height:296.5px;background:#b3e5f8;"></div>
<div style="left:28px;top:536.5px;width:629px;height:35.5px;background:#b3e5f8;border-style:solid;border-width:2px;border-color:#ffffff #7ea3b2 #7ea3b2 #ffffff;"></div>
<div style="left:38.8px;top:547.90px;font-family:'Liberation Serif', serif;font-size:14.8px;line-height:14.8px;color:#000080;font-weight:bold;white-space:pre;letter-spacing:0px;">Local</div>
<div style="left:90.3px;top:547.90px;font-family:'Liberation Serif', serif;font-size:14.8px;line-height:14.8px;color:#000080;font-weight:bold;white-space:pre;letter-spacing:0px;">Utilities</div>
<div style="left:154.9px;top:547.90px;font-family:'Liberation Serif', serif;font-size:14.8px;line-height:14.8px;color:#000080;font-weight:bold;white-space:pre;letter-spacing:0px;">Navigate</div>
<div style="left:285.8px;top:582.00px;font-family:'Liberation Mono', monospace;font-size:12px;line-height:12px;color:#000080;font-weight:normal;white-space:pre;letter-spacing:-0.2px;-webkit-text-stroke:0.2px #000080;transform:scaleY(0.93);transform-origin:0 9.20px;">Task Description</div>
<div style="left:37px;top:603px;width:588px;height:72px;background:#fcf7f3;border-style:solid;border-width:2px;border-color:#b0aca8 #ffffff #ffffff #b0aca8;"></div>
<div style="left:39px;top:605px;width:584px;height:68px;overflow:hidden;">
<div style="left:1.2000000000000028px;top:1.50px;font-family:'Liberation Mono', monospace;font-size:12px;line-height:12px;color:#000080;font-weight:normal;white-space:pre;letter-spacing:-0.2px;-webkit-text-stroke:0.2px #000080;transform:scaleY(0.93);transform-origin:0 9.20px;">If you are a writer FOR &#x27;Southern Illustrated News&#x27; DURING the Pre Civil War perio!</div>
<div style="left:1.2000000000000028px;top:15.50px;font-family:'Liberation Mono', monospace;font-size:12px;line-height:12px;color:#000080;font-weight:normal;white-space:pre;letter-spacing:-0.2px;-webkit-text-stroke:0.2px #000080;transform:scaleY(0.93);transform-origin:0 9.20px;">d and you have been assigned to write and illustrate an article ON slave life . Th!</div>
<div style="left:1.2000000000000028px;top:29.50px;font-family:'Liberation Mono', monospace;font-size:12px;line-height:12px;color:#000080;font-weight:normal;white-space:pre;letter-spacing:-0.2px;-webkit-text-stroke:0.2px #000080;transform:scaleY(0.93);transform-origin:0 9.20px;">en the HISTORICAL SOURCE &#x27;A Slave Cultivating Sugar Cane&#x27; is relevant.</div>
</div>
<div style="left:629px;top:603px;width:20px;height:72px;background:#b3e5f8;border-style:solid;border-width:2px;border-color:#7ea3b2 #ffffff #ffffff #7ea3b2;"></div>
<svg style="position:absolute;left:633.5px;top:607px" width="11" height="11" viewBox="0 0 11 11"><polygon points="5.5,0 11,11 0,11" fill="#009cd0"/><path d="M5.5,0 L0,11" stroke="#48e6ff" stroke-width="1.6" fill="none"/><path d="M5.5,0 L11,11 L0,11" stroke="#00688c" stroke-width="1.6" fill="none"/></svg>
<svg style="position:absolute;left:632.7px;top:660px" width="11" height="11" viewBox="0 0 11 11"><polygon points="0,0 11,0 5.5,11" fill="#009cd0"/><path d="M0,0 L11,0 M0,0 L5.5,11" stroke="#48e6ff" stroke-width="1.6" fill="none"/><path d="M11,0 L5.5,11" stroke="#00688c" stroke-width="1.6" fill="none"/></svg>
<div style="left:633.0px;top:624px;width:12.0px;height:30px;background:#009cd0;border-style:solid;border-width:2px;border-color:#48e6ff #00688c #00688c #48e6ff;"></div>
<div style="left:115.9px;top:691.40px;font-family:'Liberation Mono', monospace;font-size:12px;line-height:12px;color:#000080;font-weight:normal;white-space:pre;letter-spacing:-0.2px;-webkit-text-stroke:0.2px #000080;transform:scaleY(0.93);transform-origin:0 9.20px;">Criterion</div>
<svg style="position:absolute;left:193.5px;top:679px" width="14" height="14" viewBox="0 0 14 14"><polygon points="7.0,1 13,7.0 7.0,13 1,7.0" fill="#8eacba"/><path d="M1,7.0 L7.0,1 L13,7.0" stroke="#7ea3b2" stroke-width="1.6" fill="none"/><path d="M1,7.0 L7.0,13 L13,7.0" stroke="#ffffff" stroke-width="1.6" fill="none"/></svg>
<div style="left:210.5px;top:681.16px;font-family:'Liberation Sans', sans-serif;font-size:12.8px;line-height:12.8px;color:#000080;font-weight:normal;white-space:pre;letter-spacing:0px;">Relevancy</div>
<svg style="position:absolute;left:280.5px;top:679px" width="14" height="14" viewBox="0 0 14 14"><polygon points="7.0,1 13,7.0 7.0,13 1,7.0" fill="#b3e5f8"/><path d="M1,7.0 L7.0,1 L13,7.0" stroke="#ffffff" stroke-width="1.6" fill="none"/><path d="M1,7.0 L7.0,13 L13,7.0" stroke="#7ea3b2" stroke-width="1.6" fill="none"/></svg>
<div style="left:297.5px;top:681.16px;font-family:'Liberation Sans', sans-serif;font-size:12.8px;line-height:12.8px;color:#000080;font-weight:normal;white-space:pre;letter-spacing:0px;">Credibility</div>
<svg style="position:absolute;left:364.5px;top:679px" width="14" height="14" viewBox="0 0 14 14"><polygon points="7.0,1 13,7.0 7.0,13 1,7.0" fill="#b3e5f8"/><path d="M1,7.0 L7.0,1 L13,7.0" stroke="#ffffff" stroke-width="1.6" fill="none"/><path d="M1,7.0 L7.0,13 L13,7.0" stroke="#7ea3b2" stroke-width="1.6" fill="none"/></svg>
<div style="left:381.5px;top:681.16px;font-family:'Liberation Sans', sans-serif;font-size:12.8px;line-height:12.8px;color:#000080;font-weight:normal;white-space:pre;letter-spacing:0px;">Consistency</div>
<svg style="position:absolute;left:468.5px;top:679px" width="14" height="14" viewBox="0 0 14 14"><polygon points="7.0,1 13,7.0 7.0,13 1,7.0" fill="#b3e5f8"/><path d="M1,7.0 L7.0,1 L13,7.0" stroke="#ffffff" stroke-width="1.6" fill="none"/><path d="M1,7.0 L7.0,13 L13,7.0" stroke="#7ea3b2" stroke-width="1.6" fill="none"/></svg>
<div style="left:485.5px;top:681.16px;font-family:'Liberation Sans', sans-serif;font-size:12.8px;line-height:12.8px;color:#000080;font-weight:normal;white-space:pre;letter-spacing:0px;">Bias</div>
<svg style="position:absolute;left:193.5px;top:701px" width="14" height="14" viewBox="0 0 14 14"><polygon points="7.0,1 13,7.0 7.0,13 1,7.0" fill="#b3e5f8"/><path d="M1,7.0 L7.0,1 L13,7.0" stroke="#ffffff" stroke-width="1.6" fill="none"/><path d="M1,7.0 L7.0,13 L13,7.0" stroke="#7ea3b2" stroke-width="1.6" fill="none"/></svg>
<div style="left:210.5px;top:703.16px;font-family:'Liberation Sans', sans-serif;font-size:12.8px;line-height:12.8px;color:#000080;font-weight:normal;white-space:pre;letter-spacing:0px;">Accuracy</div>
<svg style="position:absolute;left:280.5px;top:701px" width="14" height="14" viewBox="0 0 14 14"><polygon points="7.0,1 13,7.0 7.0,13 1,7.0" fill="#b3e5f8"/><path d="M1,7.0 L7.0,1 L13,7.0" stroke="#ffffff" stroke-width="1.6" fill="none"/><path d="M1,7.0 L7.0,13 L13,7.0" stroke="#7ea3b2" stroke-width="1.6" fill="none"/></svg>
<div style="left:297.5px;top:703.16px;font-family:'Liberation Sans', sans-serif;font-size:12.8px;line-height:12.8px;color:#000080;font-weight:normal;white-space:pre;letter-spacing:0px;">Ambiguity</div>
<svg style="position:absolute;left:364.5px;top:701px" width="14" height="14" viewBox="0 0 14 14"><polygon points="7.0,1 13,7.0 7.0,13 1,7.0" fill="#b3e5f8"/><path d="M1,7.0 L7.0,1 L13,7.0" stroke="#ffffff" stroke-width="1.6" fill="none"/><path d="M1,7.0 L7.0,13 L13,7.0" stroke="#7ea3b2" stroke-width="1.6" fill="none"/></svg>
<div style="left:381.5px;top:703.16px;font-family:'Liberation Sans', sans-serif;font-size:12.8px;line-height:12.8px;color:#000080;font-weight:normal;white-space:pre;letter-spacing:0px;">Fact-Opinion</div>
<div style="left:520px;top:685px;width:50px;height:31px;background:#b3e5f8;border-style:solid;border-width:2px;border-color:#ffffff #7ea3b2 #7ea3b2 #ffffff;"></div>
<div style="left:520px;top:685px;width:50px;height:31px;font-family:'Liberation Sans', sans-serif;font-size:12.3px;line-height:33px;color:#000080;text-align:center;white-space:pre">Done</div>
<div style="left:102px;top:732.50px;font-family:'Liberation Mono', monospace;font-size:12px;line-height:12px;color:#000080;font-weight:normal;white-space:pre;letter-spacing:-0.2px;-webkit-text-stroke:0.2px #000080;transform:scaleY(0.93);transform-origin:0 9.20px;">Task Names</div>
<div style="left:290.2px;top:732.50px;font-family:'Liberation Mono', monospace;font-size:12px;line-height:12px;color:#000080;font-weight:normal;white-space:pre;letter-spacing:-0.2px;-webkit-text-stroke:0.2px #000080;transform:scaleY(0.93);transform-origin:0 9.20px;">Parameter Names</div>
<div style="left:491.9px;top:732.50px;font-family:'Liberation Mono', monospace;font-size:12px;line-height:12px;color:#000080;font-weight:normal;white-space:pre;letter-spacing:-0.2px;-webkit-text-stroke:0.2px #000080;transform:scaleY(0.93);transform-origin:0 9.20px;">Parameter Values</div>
<div style="left:36px;top:753px;width:179px;height:72px;background:#fdfbc0;border-style:solid;border-width:2px;border-color:#aba67e #ffffff #ffffff #aba67e;"></div>
<div style="left:43px;top:756px;width:165px;height:13px;background:#000080;"></div>
<div style="left:47.2px;top:756.80px;font-family:'Liberation Mono', monospace;font-size:12px;line-height:12px;color:#fff;font-weight:normal;white-space:pre;letter-spacing:-0.2px;-webkit-text-stroke:0.2px #fff;transform:scaleY(0.93);transform-origin:0 9.20px;">WRITE-ARTICLE-1</div>
<div style="left:47.2px;top:770.80px;font-family:'Liberation Mono', monospace;font-size:12px;line-height:12px;color:#000080;font-weight:normal;white-space:pre;letter-spacing:-0.2px;-webkit-text-stroke:0.2px #000080;transform:scaleY(0.93);transform-origin:0 9.20px;">WRITE-ARTICLE-2</div>
<div style="left:47.2px;top:784.80px;font-family:'Liberation Mono', monospace;font-size:12px;line-height:12px;color:#000080;font-weight:normal;white-space:pre;letter-spacing:-0.2px;-webkit-text-stroke:0.2px #000080;transform:scaleY(0.93);transform-origin:0 9.20px;">WRITE-ARTICLE-3</div>
<div style="left:47.2px;top:798.80px;font-family:'Liberation Mono', monospace;font-size:12px;line-height:12px;color:#000080;font-weight:normal;white-space:pre;letter-spacing:-0.2px;-webkit-text-stroke:0.2px #000080;transform:scaleY(0.93);transform-origin:0 9.20px;">WRITE-DOCUMENTARY-1</div>
<div style="left:47.2px;top:812.80px;font-family:'Liberation Mono', monospace;font-size:12px;line-height:12px;color:#000080;font-weight:normal;white-space:pre;letter-spacing:-0.2px;-webkit-text-stroke:0.2px #000080;transform:scaleY(0.93);transform-origin:0 9.20px;">WRITE-WWW-ARTICLE-1</div>
<div style="left:219px;top:753px;width:20px;height:72px;background:#b3e5f8;border-style:solid;border-width:2px;border-color:#7ea3b2 #ffffff #ffffff #7ea3b2;"></div>
<svg style="position:absolute;left:223.5px;top:757px" width="11" height="11" viewBox="0 0 11 11"><polygon points="5.5,0 11,11 0,11" fill="#009cd0"/><path d="M5.5,0 L0,11" stroke="#48e6ff" stroke-width="1.6" fill="none"/><path d="M5.5,0 L11,11 L0,11" stroke="#00688c" stroke-width="1.6" fill="none"/></svg>
<svg style="position:absolute;left:222.7px;top:810px" width="11" height="11" viewBox="0 0 11 11"><polygon points="0,0 11,0 5.5,11" fill="#009cd0"/><path d="M0,0 L11,0 M0,0 L5.5,11" stroke="#48e6ff" stroke-width="1.6" fill="none"/><path d="M11,0 L5.5,11" stroke="#00688c" stroke-width="1.6" fill="none"/></svg>
<div style="left:223.0px;top:773px;width:12.0px;height:25px;background:#009cd0;border-style:solid;border-width:2px;border-color:#48e6ff #00688c #00688c #48e6ff;"></div>
<div style="left:242px;top:753px;width:177px;height:72px;background:#fdfbc0;border-style:solid;border-width:2px;border-color:#aba67e #ffffff #ffffff #aba67e;"></div>
<div style="left:249px;top:798px;width:164px;height:13px;background:#000080;"></div>
<div style="left:252.1px;top:756.80px;font-family:'Liberation Mono', monospace;font-size:12px;line-height:12px;color:#000080;font-weight:normal;white-space:pre;letter-spacing:-0.2px;-webkit-text-stroke:0.2px #000080;transform:scaleY(0.93);transform-origin:0 9.20px;">FOR</div>
<div style="left:252.1px;top:770.80px;font-family:'Liberation Mono', monospace;font-size:12px;line-height:12px;color:#000080;font-weight:normal;white-space:pre;letter-spacing:-0.2px;-webkit-text-stroke:0.2px #000080;transform:scaleY(0.93);transform-origin:0 9.20px;">DURING</div>
<div style="left:252.1px;top:784.80px;font-family:'Liberation Mono', monospace;font-size:12px;line-height:12px;color:#000080;font-weight:normal;white-space:pre;letter-spacing:-0.2px;-webkit-text-stroke:0.2px #000080;transform:scaleY(0.93);transform-origin:0 9.20px;">ON</div>
<div style="left:252.1px;top:798.80px;font-family:'Liberation Mono', monospace;font-size:12px;line-height:12px;color:#fff;font-weight:normal;white-space:pre;letter-spacing:-0.2px;-webkit-text-stroke:0.2px #fff;transform:scaleY(0.93);transform-origin:0 9.20px;">HIST-SOURCE</div>
<div style="left:424px;top:753px;width:20px;height:72px;background:#b3e5f8;border-style:solid;border-width:2px;border-color:#7ea3b2 #ffffff #ffffff #7ea3b2;"></div>
<svg style="position:absolute;left:428.5px;top:757px" width="11" height="11" viewBox="0 0 11 11"><polygon points="5.5,0 11,11 0,11" fill="#009cd0"/><path d="M5.5,0 L0,11" stroke="#48e6ff" stroke-width="1.6" fill="none"/><path d="M5.5,0 L11,11 L0,11" stroke="#00688c" stroke-width="1.6" fill="none"/></svg>
<svg style="position:absolute;left:427.7px;top:810px" width="11" height="11" viewBox="0 0 11 11"><polygon points="0,0 11,0 5.5,11" fill="#009cd0"/><path d="M0,0 L11,0 M0,0 L5.5,11" stroke="#48e6ff" stroke-width="1.6" fill="none"/><path d="M11,0 L5.5,11" stroke="#00688c" stroke-width="1.6" fill="none"/></svg>
<div style="left:428.0px;top:774px;width:12.0px;height:30px;background:#009cd0;border-style:solid;border-width:2px;border-color:#48e6ff #00688c #00688c #48e6ff;"></div>
<div style="left:448px;top:753px;width:177px;height:72px;background:#fdfbc0;border-style:solid;border-width:2px;border-color:#aba67e #ffffff #ffffff #aba67e;"></div>
<div style="left:454px;top:784px;width:169px;height:13px;background:#000080;"></div>
<div style="left:450px;top:755px;width:173px;height:68px;overflow:hidden;">
<div style="left:7.600000000000023px;top:1.80px;font-family:'Liberation Mono', monospace;font-size:12px;line-height:12px;color:#000080;font-weight:normal;white-space:pre;letter-spacing:-0.2px;-webkit-text-stroke:0.2px #000080;transform:scaleY(0.93);transform-origin:0 9.20px;">L20-BLOODHOUND-BUSINESS</div>
<div style="left:7.600000000000023px;top:15.80px;font-family:'Liberation Mono', monospace;font-size:12px;line-height:12px;color:#000080;font-weight:normal;white-space:pre;letter-spacing:-0.2px;-webkit-text-stroke:0.2px #000080;transform:scaleY(0.93);transform-origin:0 9.20px;">L26-PRESENT-FROM-THE-BIG-HOUSE</div>
<div style="left:7.600000000000023px;top:29.80px;font-family:'Liberation Mono', monospace;font-size:12px;line-height:12px;color:#fff;font-weight:normal;white-space:pre;letter-spacing:-0.2px;-webkit-text-stroke:0.2px #fff;transform:scaleY(0.93);transform-origin:0 9.20px;">L28-SLAVE-CULTIVATING-SUGAR-CANE</div>
<div style="left:7.600000000000023px;top:43.80px;font-family:'Liberation Mono', monospace;font-size:12px;line-height:12px;color:#000080;font-weight:normal;white-space:pre;letter-spacing:-0.2px;-webkit-text-stroke:0.2px #000080;transform:scaleY(0.93);transform-origin:0 9.20px;">L36-BOSTON-BLACKS-DEFENDING</div>
<div style="left:7.600000000000023px;top:57.80px;font-family:'Liberation Mono', monospace;font-size:12px;line-height:12px;color:#000080;font-weight:normal;white-space:pre;letter-spacing:-0.2px;-webkit-text-stroke:0.2px #000080;transform:scaleY(0.93);transform-origin:0 9.20px;">LETTER</div>
</div>
<div style="left:629px;top:753px;width:20px;height:72px;background:#b3e5f8;border-style:solid;border-width:2px;border-color:#7ea3b2 #ffffff #ffffff #7ea3b2;"></div>
<svg style="position:absolute;left:633.5px;top:757px" width="11" height="11" viewBox="0 0 11 11"><polygon points="5.5,0 11,11 0,11" fill="#009cd0"/><path d="M5.5,0 L0,11" stroke="#48e6ff" stroke-width="1.6" fill="none"/><path d="M5.5,0 L11,11 L0,11" stroke="#00688c" stroke-width="1.6" fill="none"/></svg>
<svg style="position:absolute;left:632.7px;top:810px" width="11" height="11" viewBox="0 0 11 11"><polygon points="0,0 11,0 5.5,11" fill="#009cd0"/><path d="M0,0 L11,0 M0,0 L5.5,11" stroke="#48e6ff" stroke-width="1.6" fill="none"/><path d="M11,0 L5.5,11" stroke="#00688c" stroke-width="1.6" fill="none"/></svg>
<div style="left:633.0px;top:790px;width:12.0px;height:2px;background:#00688c;"></div>
</body></html>
